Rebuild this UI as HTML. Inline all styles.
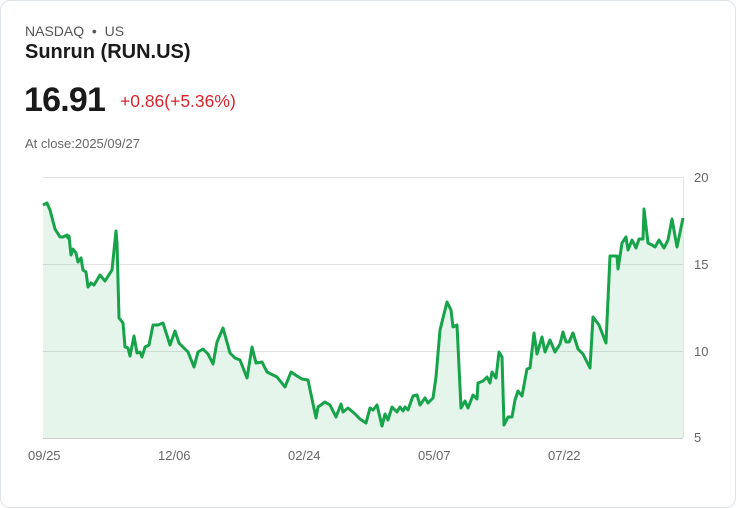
<!DOCTYPE html>
<html><head><meta charset="utf-8"><style>
html,body{margin:0;padding:0;background:#fff;width:736px;height:508px;overflow:hidden;font-family:"Liberation Sans",Arial,sans-serif}
.card{position:absolute;left:0;top:0;width:734px;height:506px;border:1px solid #dfe3ea;border-radius:10px;background:#fff}
.t{position:absolute;white-space:nowrap}
</style></head><body>
<div class="card"></div>
<div class="t" style="left:25px;top:23px;font-size:14px;color:#555">NASDAQ &nbsp;•&nbsp; US</div>
<div class="t" style="left:25px;top:41px;font-size:20px;font-weight:bold;color:#1a1a1a">Sunrun (RUN.US)</div>
<div class="t" style="left:24px;top:81px;font-size:34px;font-weight:bold;color:#1a1a1a;letter-spacing:-0.8px">16.91</div>
<div class="t" style="left:120px;top:91px;font-size:17.5px;color:#d8262c">+0.86(+5.36%)</div>
<div class="t" style="left:25px;top:136px;font-size:13px;color:#666">At close:2025/09/27</div>
<svg width="736" height="508" style="position:absolute;left:0;top:0">
<g stroke="#e3e3e3" stroke-width="1"><line x1="43" y1="177.5" x2="683" y2="177.5"/><line x1="43" y1="264.5" x2="683" y2="264.5"/><line x1="43" y1="351.5" x2="683" y2="351.5"/></g>
<line x1="43" y1="438.5" x2="683" y2="438.5" stroke="#ccc"/>
<line x1="683.5" y1="177" x2="683.5" y2="438" stroke="#e3e3e3"/>
<g font-size="13" fill="#666" font-family="Liberation Sans,Arial,sans-serif">
<text x="694" y="182">20</text><text x="694" y="269">15</text><text x="694" y="356">10</text><text x="694" y="442">5</text>
<text x="28" y="460">09/25</text><text x="158" y="460">12/06</text><text x="288" y="460">02/24</text><text x="418" y="460">05/07</text><text x="548" y="460">07/22</text>
</g>
<path d="M43,205 L47,203 L50,210 L55,229 L60,237 L63,237 L67,235 L68,238 L69,236 L71,255 L73,249 L76,253 L78,262 L81,258 L83,270 L86,272 L88,287 L91,283 L94,285 L100,275 L105,281 L112,270 L116,231 L117,243 L119,318 L123,323 L125,347 L128,348 L130,356 L134,336 L137,353 L140,352 L142,357 L145,347 L149,345 L153,325 L158,325 L163,323 L170,345 L175,331 L179,343 L183,347 L188,352 L194,367 L198,352 L203,349 L208,354 L213,364 L217,342 L223,328 L230,353 L235,358 L240,360 L247,378 L252,347 L256,363 L262,362 L267,372 L277,377 L285,387 L291,372 L297,376 L302,379 L308,380 L316,418 L318,407 L325,402 L330,405 L336,417 L341,404 L343,412 L348,408 L354,413 L360,419 L366,423 L370,408 L373,410 L377,405 L382,426 L385,414 L388,420 L392,407 L397,412 L400,407 L403,411 L405,407 L408,410 L413,396 L417,395 L420,405 L425,398 L428,403 L433,398 L436,377 L440,330 L447,302 L451,310 L453,327 L457,325 L461,408 L465,401 L468,408 L473,395 L477,399 L478,383 L483,381 L487,377 L490,383 L492,372 L496,378 L499,352 L502,357 L504,425 L508,417 L512,417 L515,400 L518,391 L522,396 L527,369 L530,368 L534,333 L537,354 L542,337 L545,352 L550,340 L555,352 L560,344 L563,332 L566,342 L569,342 L573,333 L578,349 L583,354 L590,368 L593,317 L599,325 L606,343 L610,256 L617,256 L618,269 L622,243 L626,237 L628,250 L632,240 L636,248 L639,239 L643,239 L644,209 L648,243 L652,245 L655,247 L659,240 L664,248 L668,240 L672,219 L677,247 L683,218 L683,438 L43,438 Z" fill="#16a34a" fill-opacity="0.11"/>
<path d="M43,205 L47,203 L50,210 L55,229 L60,237 L63,237 L67,235 L68,238 L69,236 L71,255 L73,249 L76,253 L78,262 L81,258 L83,270 L86,272 L88,287 L91,283 L94,285 L100,275 L105,281 L112,270 L116,231 L117,243 L119,318 L123,323 L125,347 L128,348 L130,356 L134,336 L137,353 L140,352 L142,357 L145,347 L149,345 L153,325 L158,325 L163,323 L170,345 L175,331 L179,343 L183,347 L188,352 L194,367 L198,352 L203,349 L208,354 L213,364 L217,342 L223,328 L230,353 L235,358 L240,360 L247,378 L252,347 L256,363 L262,362 L267,372 L277,377 L285,387 L291,372 L297,376 L302,379 L308,380 L316,418 L318,407 L325,402 L330,405 L336,417 L341,404 L343,412 L348,408 L354,413 L360,419 L366,423 L370,408 L373,410 L377,405 L382,426 L385,414 L388,420 L392,407 L397,412 L400,407 L403,411 L405,407 L408,410 L413,396 L417,395 L420,405 L425,398 L428,403 L433,398 L436,377 L440,330 L447,302 L451,310 L453,327 L457,325 L461,408 L465,401 L468,408 L473,395 L477,399 L478,383 L483,381 L487,377 L490,383 L492,372 L496,378 L499,352 L502,357 L504,425 L508,417 L512,417 L515,400 L518,391 L522,396 L527,369 L530,368 L534,333 L537,354 L542,337 L545,352 L550,340 L555,352 L560,344 L563,332 L566,342 L569,342 L573,333 L578,349 L583,354 L590,368 L593,317 L599,325 L606,343 L610,256 L617,256 L618,269 L622,243 L626,237 L628,250 L632,240 L636,248 L639,239 L643,239 L644,209 L648,243 L652,245 L655,247 L659,240 L664,248 L668,240 L672,219 L677,247 L683,218" fill="none" stroke="#16a34a" stroke-width="3" stroke-linejoin="round"/>
</svg>
</body></html>
